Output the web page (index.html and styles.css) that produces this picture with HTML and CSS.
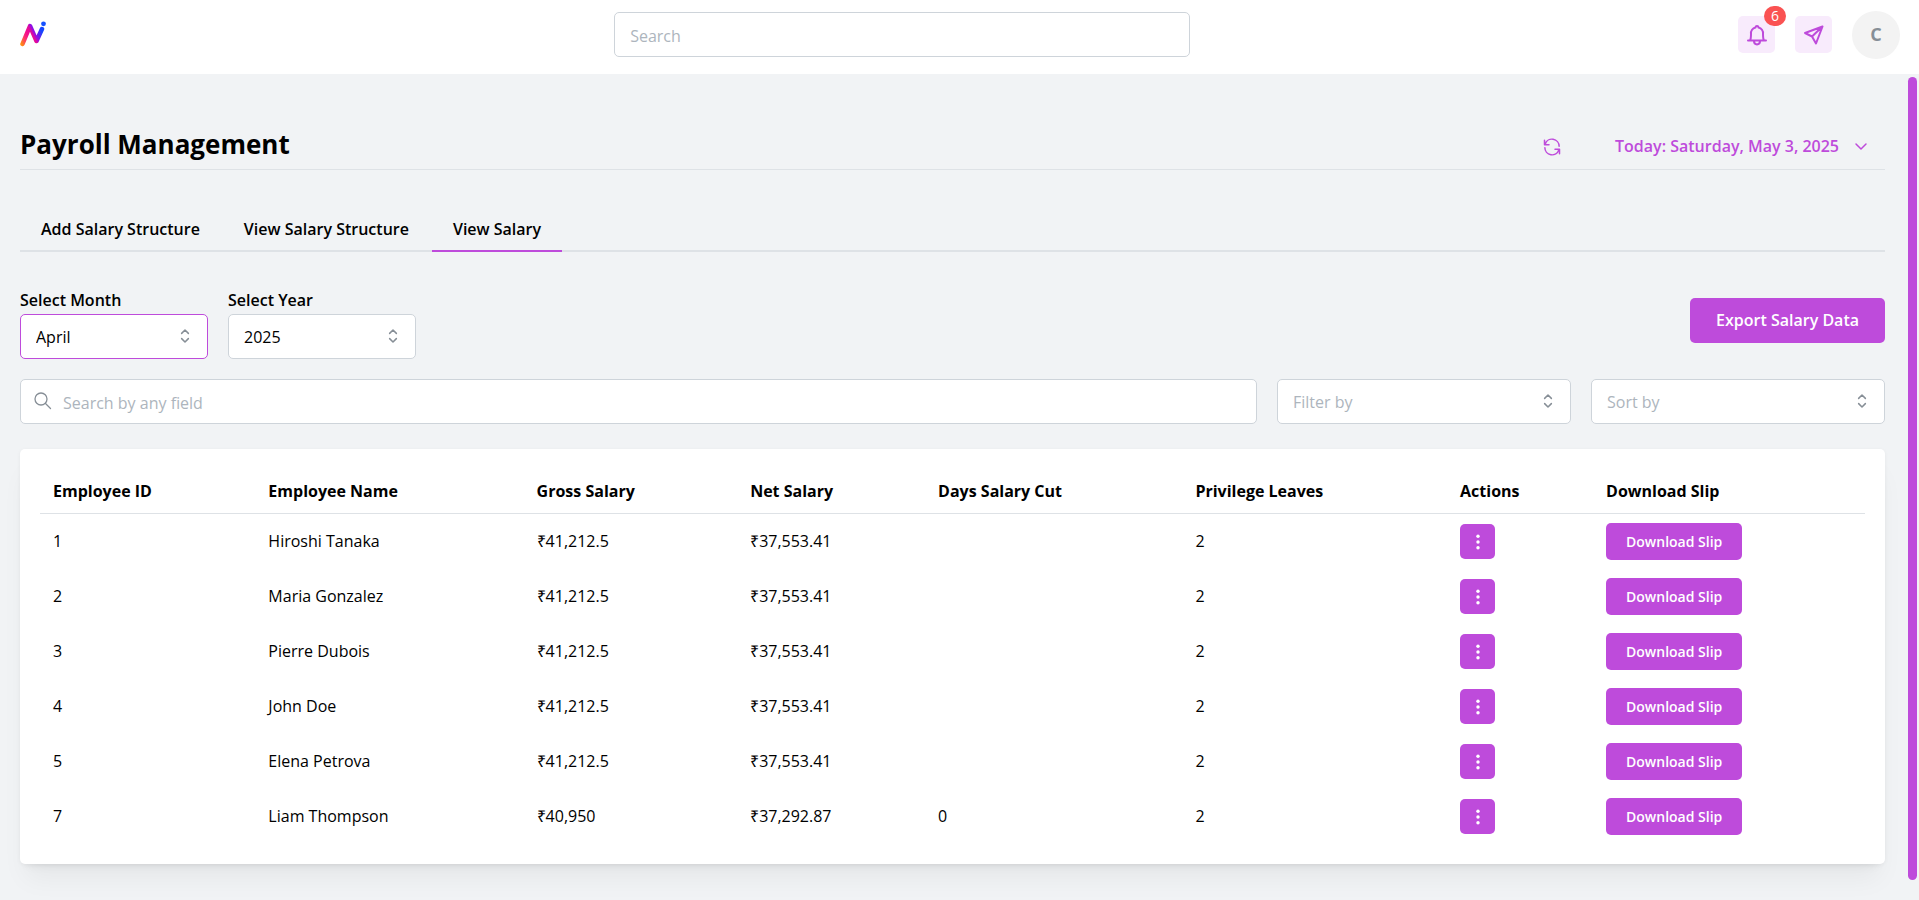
FILE: index.html
```
<!DOCTYPE html>
<html lang="en">
<head>
    <meta charset="UTF-8">
    <meta name="viewport" content="width=device-width, initial-scale=1.0">
    <title>Payroll Management</title>
    <link rel="stylesheet" href="styles.css">
</head>
<body>
    <svg class="sprite" aria-hidden="true">
        <symbol id="icon-selector" viewBox="0 0 24 24">
            <path d="M7.5 8.500 12 4l4.500 4.500M7.500 15.500 12 20l4.500-4.500"/>
        </symbol>
        <symbol id="icon-dots" viewBox="0 0 20 20">
            <circle cx="10" cy="3.600" r="1.900"/>
            <circle cx="10" cy="10" r="1.900"/>
            <circle cx="10" cy="16.400" r="1.900"/>
        </symbol>
    </svg>

    <header class="header">
        <a class="logo" href="#" aria-label="Home">
            <svg width="28" height="28" viewBox="0 0 28 28" fill="none">
                <defs>
                    <linearGradient id="logoGradient" gradientUnits="userSpaceOnUse" x1="2" y1="24" x2="23" y2="13">
                        <stop offset="0" stop-color="#ff8a14"/>
                        <stop offset="0.250" stop-color="#fb2f70"/>
                        <stop offset="0.400" stop-color="#f50f8c"/>
                        <stop offset="0.600" stop-color="#e00a9c"/>
                        <stop offset="0.700" stop-color="#9a0ae0"/>
                        <stop offset="1" stop-color="#1446ff"/>
                    </linearGradient>
                </defs>
                <path d="M2.500 23 10 5l6.500 15L22 8" stroke="url(#logoGradient)" stroke-width="4.500" stroke-linecap="round" stroke-linejoin="round"/>
                <circle cx="23.500" cy="2.800" r="2.400" fill="#1450ff"/>
            </svg>
        </a>
        <input class="control header-search" type="search" placeholder="Search" aria-label="Search">
        <div class="header-actions">
            <button class="icon-button" type="button" aria-label="Notifications">
                <svg width="24" height="24" viewBox="0 0 24 24">
                    <path d="M3 17.500h18M5 17.500c1-1.500 1-3 1-6.500a6 6 0 0 1 4.500-6.500c0-2 3-2 3 0A6 6 0 0 1 18 11c0 3.500 0 5 1 6.500M9 18c0 4.500 6 4.500 6 0"/>
                </svg>
                <span class="badge">6</span>
            </button>
            <button class="icon-button" type="button" aria-label="Messages">
                <svg width="24" height="24" viewBox="0 0 24 24">
                    <path d="M20.500 3.500 3 10l7 3.500 4 7zM20.500 3.500 10 13.500"/>
                </svg>
            </button>
            <button class="avatar" type="button" aria-label="Account">C</button>
        </div>
    </header>

    <div class="page">
        <main class="content">
            <div class="title-row">
                <h1>Payroll Management</h1>
                <div class="title-tools">
                    <button class="link-button" type="button" aria-label="Refresh">
                        <svg width="18" height="18" viewBox="0 0 24 24">
                            <path d="M2 3v6h6M3 8a9.500 9.500 0 0 1 18.500 3M22 21v-6h-6M21 16a9.500 9.500 0 0 1-18.500-3"/>
                        </svg>
                    </button>
                    <button class="link-button" type="button">
                        Today: Saturday, May 3, 2025
                        <svg class="chevron" width="16" height="16" viewBox="0 0 16 16">
                            <path d="m3 5 5 5 5-5"/>
                        </svg>
                    </button>
                </div>
            </div>

            <nav class="tabs">
                <a class="tab" href="#">Add Salary Structure</a>
                <a class="tab" href="#">View Salary Structure</a>
                <a class="tab active" href="#">View Salary</a>
            </nav>

            <div class="period-row">
                <div class="period-field">
                    <label for="month">Select Month</label>
                    <div class="select-wrap">
                        <select class="control focused" id="month">
                            <option>April</option>
                        </select>
                        <svg class="select-icon"><use href="#icon-selector"/></svg>
                    </div>
                </div>
                <div class="period-field">
                    <label for="year">Select Year</label>
                    <div class="select-wrap">
                        <select class="control" id="year">
                            <option>2025</option>
                        </select>
                        <svg class="select-icon"><use href="#icon-selector"/></svg>
                    </div>
                </div>
                <button class="button export" type="button">Export Salary Data</button>
            </div>

            <div class="filter-row">
                <div class="search-wrap">
                    <svg class="search-icon" viewBox="0 0 20 20">
                        <circle cx="8" cy="8" r="6"/>
                        <path d="m12.500 12.500 5 5"/>
                    </svg>
                    <input class="control" type="search" placeholder="Search by any field" aria-label="Search by any field">
                </div>
                <div class="select-wrap">
                    <select class="control empty" aria-label="Filter by">
                        <option>Filter by</option>
                    </select>
                    <svg class="select-icon"><use href="#icon-selector"/></svg>
                </div>
                <div class="select-wrap">
                    <select class="control empty" aria-label="Sort by">
                        <option>Sort by</option>
                    </select>
                    <svg class="select-icon"><use href="#icon-selector"/></svg>
                </div>
            </div>

            <section class="card">
                <table>
                    <thead>
                        <tr>
                            <th class="col-id">Employee ID</th>
                            <th class="col-name">Employee Name</th>
                            <th class="col-gross">Gross Salary</th>
                            <th class="col-net">Net Salary</th>
                            <th class="col-cut">Days Salary Cut</th>
                            <th class="col-leaves">Privilege Leaves</th>
                            <th class="col-actions">Actions</th>
                            <th>Download Slip</th>
                        </tr>
                    </thead>
                    <tbody>
                        <tr>
                            <td>1</td>
                            <td>Hiroshi Tanaka</td>
                            <td>₹41,212.5</td>
                            <td>₹37,553.41</td>
                            <td></td>
                            <td>2</td>
                            <td><button class="button menu" type="button" aria-label="Actions"><svg><use href="#icon-dots"/></svg></button></td>
                            <td><button class="button slip" type="button">Download Slip</button></td>
                        </tr>
                        <tr>
                            <td>2</td>
                            <td>Maria Gonzalez</td>
                            <td>₹41,212.5</td>
                            <td>₹37,553.41</td>
                            <td></td>
                            <td>2</td>
                            <td><button class="button menu" type="button" aria-label="Actions"><svg><use href="#icon-dots"/></svg></button></td>
                            <td><button class="button slip" type="button">Download Slip</button></td>
                        </tr>
                        <tr>
                            <td>3</td>
                            <td>Pierre Dubois</td>
                            <td>₹41,212.5</td>
                            <td>₹37,553.41</td>
                            <td></td>
                            <td>2</td>
                            <td><button class="button menu" type="button" aria-label="Actions"><svg><use href="#icon-dots"/></svg></button></td>
                            <td><button class="button slip" type="button">Download Slip</button></td>
                        </tr>
                        <tr>
                            <td>4</td>
                            <td>John Doe</td>
                            <td>₹41,212.5</td>
                            <td>₹37,553.41</td>
                            <td></td>
                            <td>2</td>
                            <td><button class="button menu" type="button" aria-label="Actions"><svg><use href="#icon-dots"/></svg></button></td>
                            <td><button class="button slip" type="button">Download Slip</button></td>
                        </tr>
                        <tr>
                            <td>5</td>
                            <td>Elena Petrova</td>
                            <td>₹41,212.5</td>
                            <td>₹37,553.41</td>
                            <td></td>
                            <td>2</td>
                            <td><button class="button menu" type="button" aria-label="Actions"><svg><use href="#icon-dots"/></svg></button></td>
                            <td><button class="button slip" type="button">Download Slip</button></td>
                        </tr>
                        <tr>
                            <td>7</td>
                            <td>Liam Thompson</td>
                            <td>₹40,950</td>
                            <td>₹37,292.87</td>
                            <td>0</td>
                            <td>2</td>
                            <td><button class="button menu" type="button" aria-label="Actions"><svg><use href="#icon-dots"/></svg></button></td>
                            <td><button class="button slip" type="button">Download Slip</button></td>
                        </tr>
                    </tbody>
                </table>
            </section>
        </main>
        <div class="scroll-thumb"></div>
    </div>
</body>
</html>
```
FILE: styles.css
```
* {
    box-sizing: border-box;
}
body {
    margin: 0;
    min-height: 100vh;
    display: flex;
    flex-direction: column;
    background: #f1f3f5;
    color: #000;
    font-family: "Segoe UI", "Open Sans", sans-serif;
    font-size: 16px;
    line-height: 27px;
}
button, input, select {
    font: inherit;
}
svg {
    display: block;
    fill: none;
    stroke: currentColor;
    stroke-width: 2;
    stroke-linecap: round;
    stroke-linejoin: round;
}
.sprite {
    display: none;
}

/* Header */
.header {
    display: flex;
    align-items: center;
    justify-content: space-between;
    height: 74px;
    padding: 0 19px 5px 20px;
    background: #fff;
}
.logo {
    width: 46px;
}
.logo svg {
    stroke: none;
}
.header-actions {
    display: flex;
    align-items: center;
    gap: 20px;
}
.icon-button {
    position: relative;
    display: flex;
    align-items: center;
    justify-content: center;
    width: 37px;
    height: 37px;
    padding: 0;
    border: none;
    border-radius: 5px;
    background: #f8ebfc;
    color: #be4bdb;
    cursor: pointer;
}
.badge {
    position: absolute;
    top: -10px;
    right: -11px;
    width: 22px;
    height: 20px;
    border-radius: 10px;
    background: #fa5252;
    color: #fff;
    font-size: 14px;
    line-height: 20px;
}
.avatar {
    width: 48px;
    height: 48px;
    padding: 0;
    border: none;
    border-radius: 50%;
    background: #f3f3f3;
    color: #868e96;
    font-size: 18px;
    font-weight: 700;
}

/* Shared controls */
.control {
    width: 100%;
    height: 45px;
    padding: 2px 15px 0;
    border: 1px solid #ced4da;
    border-radius: 5px;
    outline: none;
    background: #fff;
    color: #000;
    appearance: none;
}
.control::placeholder, .control.empty {
    color: #adb5bd;
}
.control.focused {
    border-color: #be4bdb;
}
.header-search {
    width: 30vw;
}
.select-wrap, .search-wrap {
    position: relative;
}
.select-icon {
    position: absolute;
    top: 13px;
    right: 14px;
    width: 18px;
    height: 18px;
    color: #868e96;
    pointer-events: none;
}
.search-icon {
    position: absolute;
    top: 12px;
    left: 13px;
    width: 20px;
    height: 20px;
    color: #868e96;
    stroke-width: 1.3;
}
.search-wrap .control {
    padding-left: 42px;
}
.button {
    border: none;
    border-radius: 5px;
    background: #be4bdb;
    color: #fff;
    font-weight: 600;
    cursor: pointer;
}

/* Page */
.page {
    flex: 1;
    display: flex;
    padding-right: 2px;
}
.content {
    flex: 1;
    padding: 50px 23px 20px 20px;
}
.scroll-thumb {
    width: 9px;
    margin: 3px 0 20px;
    border-radius: 5px;
    background: #be4bdb;
}
.title-row {
    display: flex;
    justify-content: space-between;
    align-items: center;
    height: 46px;
    border-bottom: 1px solid #dee2e6;
}
h1 {
    margin: 0 0 5px;
    font-size: 26px;
    line-height: 40px;
}
.title-tools {
    display: flex;
    align-items: center;
    gap: 54px;
    padding-right: 16px;
}
.link-button {
    display: flex;
    align-items: center;
    gap: 14px;
    padding: 0;
    border: none;
    background: none;
    color: #be4bdb;
    font-weight: 600;
    cursor: pointer;
}
.chevron {
    stroke-width: 1.5;
}
.tabs {
    display: flex;
    gap: 2px;
    margin-top: 38px;
    border-bottom: 2px solid #dee2e6;
}
.tab {
    margin-bottom: -2px;
    padding: 8px 21px 7px;
    border-bottom: 2px solid transparent;
    color: #000;
    font-weight: 600;
    text-decoration: none;
}
.tab.active {
    border-color: #be4bdb;
}
.period-row {
    display: flex;
    align-items: center;
    gap: 20px;
    margin-top: 35px;
}
.period-field {
    width: 188px;
}
.period-field label {
    display: block;
    font-weight: 600;
}
.export {
    height: 45px;
    margin: 0 0 5px auto;
    padding: 0 26px;
}
.filter-row {
    display: grid;
    grid-template-columns: 1fr 294px 294px;
    gap: 20px;
    margin-top: 20px;
}

/* Salary table */
.card {
    margin-top: 25px;
    padding: 20px;
    border-radius: 5px;
    background: #fff;
    box-shadow: 0 1px 4px rgba(0, 0, 0, 0.05), 0 20px 25px -6px rgba(0, 0, 0, 0.05), 0 9px 9px -7px rgba(0, 0, 0, 0.06);
}
table {
    width: 100%;
    table-layout: fixed;
    border-collapse: separate;
    border-spacing: 0;
}
th, td {
    height: 55px;
    padding: 0 13px;
    text-align: left;
}
th {
    height: 45px;
    border-bottom: 1px solid #dee2e6;
    font-weight: 700;
}
.col-id {
    width: 11.8%;
}
.col-name {
    width: 14.7%;
}
.col-gross {
    width: 11.7%;
}
.col-net {
    width: 10.3%;
}
.col-cut {
    width: 14.1%;
}
.col-leaves {
    width: 14.5%;
}
.col-actions {
    width: 8%;
}
.menu {
    display: flex;
    align-items: center;
    justify-content: center;
    width: 35px;
    height: 35px;
    padding: 0;
}
.menu svg {
    width: 18px;
    height: 18px;
    fill: currentColor;
    stroke: none;
}
.slip {
    display: block;
    height: 37px;
    padding: 0 20px;
    font-size: 14px;
}
```
